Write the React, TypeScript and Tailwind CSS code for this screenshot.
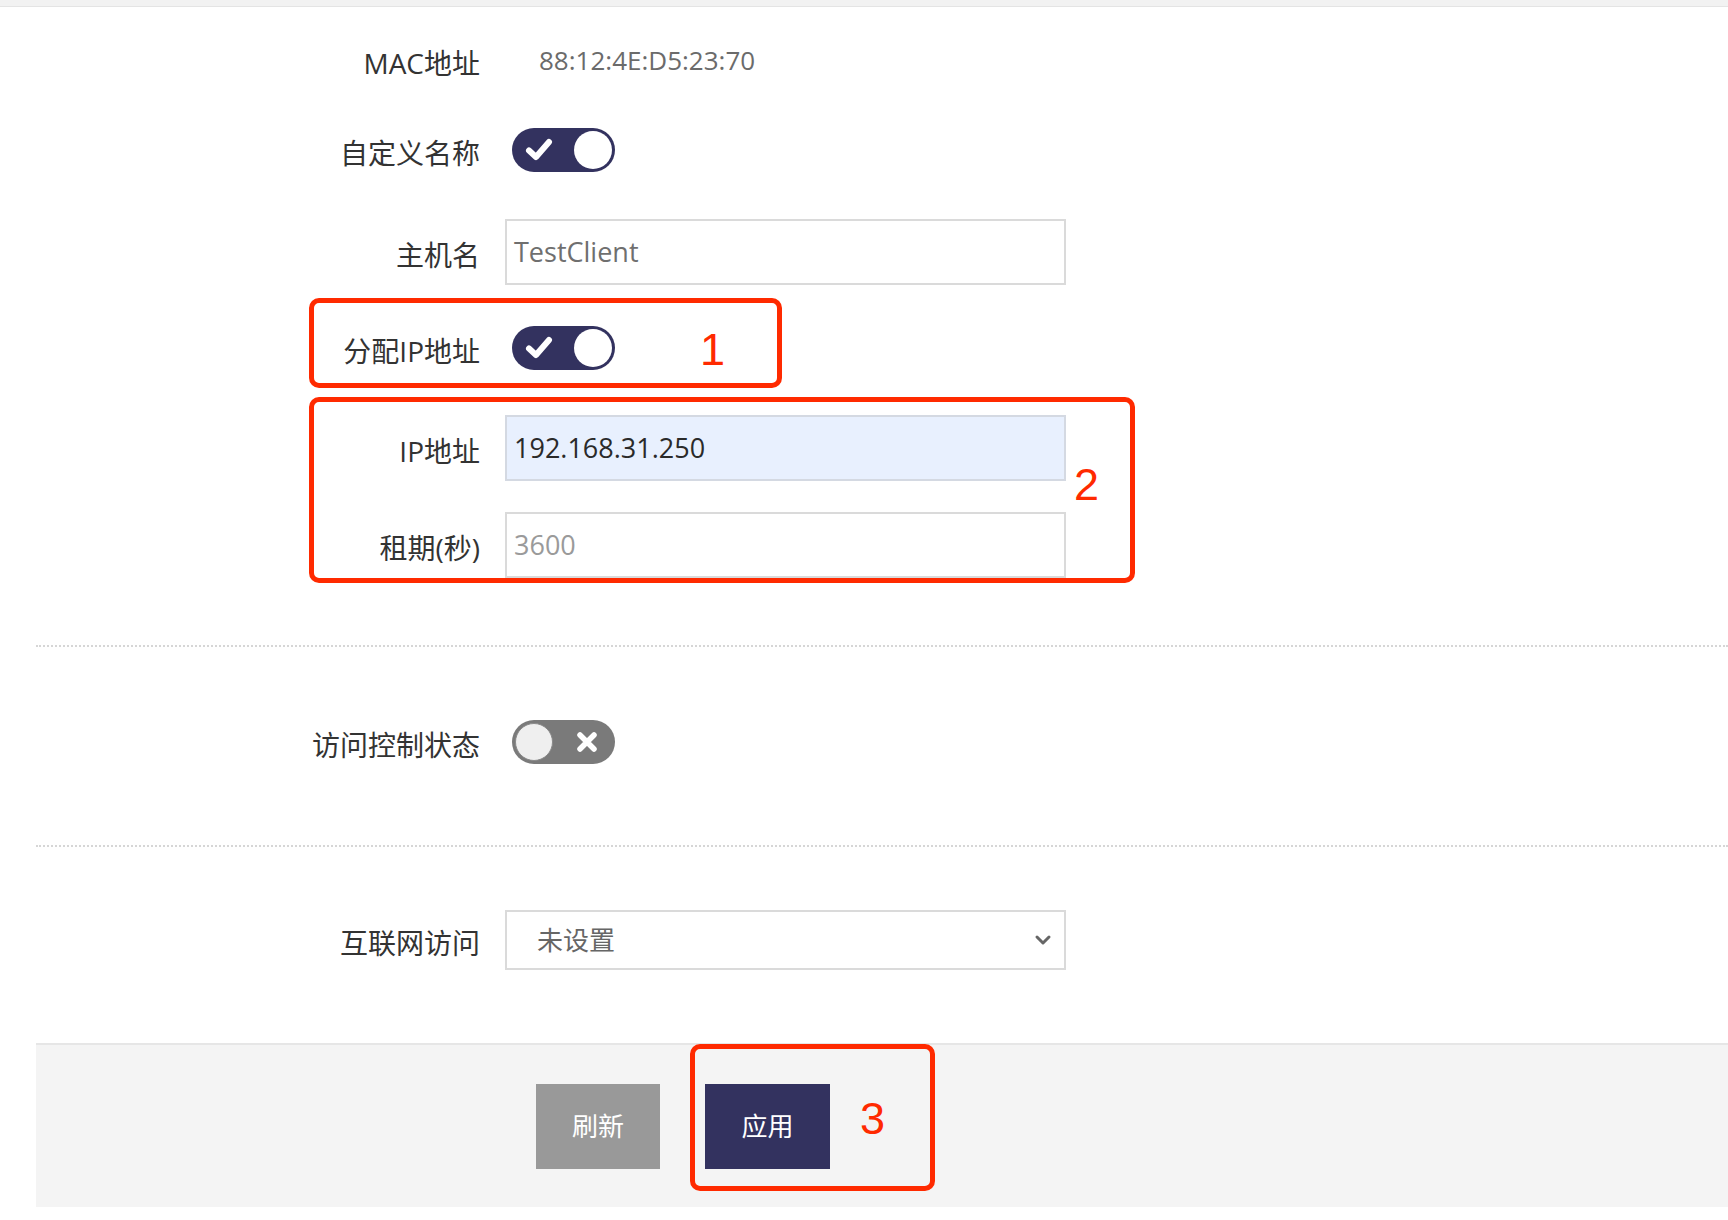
import React from "react";

const FONT = "font-['Open_Sans','Noto_Sans_CJK_SC',sans-serif]";

function ToggleOn() {
  return (
    <div className="w-[103px] h-[44px] rounded-full bg-[#33325f] flex items-center justify-between pl-[12px] pr-[3px]">
      <svg width="30" height="26" viewBox="0 0 30 26" fill="none">
        <path d="M5 13.5 L12 20 L25 5" stroke="white" strokeWidth="6" strokeLinecap="round" strokeLinejoin="round" />
      </svg>
      <div className="w-[38px] h-[38px] rounded-full bg-white" />
    </div>
  );
}

function ToggleOff() {
  return (
    <div className="w-[103px] h-[44px] rounded-full bg-[#7a7a7a] flex items-center justify-between pl-[3px] pr-[17px]">
      <div className="w-[38px] h-[38px] rounded-full bg-[#efefef] border border-[#8a8a8a]" />
      <svg width="22" height="22" viewBox="0 0 22 22" fill="none">
        <path d="M4 4 L18 18 M18 4 L4 18" stroke="white" strokeWidth="5.5" strokeLinecap="round" />
      </svg>
    </div>
  );
}

function Label({ children }: { children: React.ReactNode }) {
  return (
    <div className="w-[444px] shrink-0 text-right text-[28px] text-[#333333] pt-[6px] leading-none">{children}</div>
  );
}

export default function App() {
  return (
    <div className={`relative w-[1728px] h-[1220px] bg-white overflow-hidden ${FONT}`}>
      <div className="h-[7px] bg-[#f2f2f2] border-b border-[#e4e4e4]" />
      <div className="pl-[36px]">
        {/* MAC */}
        <div className="flex items-center h-[44px] mt-[31px]">
          <Label>MAC地址</Label>
          <div className="ml-[59px] text-[26px] text-[#6b6b6b] leading-none">88:12:4E:D5:23:70</div>
        </div>
        {/* custom name */}
        <div className="flex items-center h-[44px] mt-[46px]">
          <Label>自定义名称</Label>
          <div className="ml-[32px]">
            <ToggleOn />
          </div>
        </div>
        {/* hostname */}
        <div className="flex items-center h-[66px] mt-[47px]">
          <Label>主机名</Label>
          <div className="ml-[25px] w-[561px] h-[66px] border-2 border-[#dadada] bg-white flex items-center pl-[7px] text-[27px] text-[#6f6f6f]">
            TestClient
          </div>
        </div>
        {/* assign ip */}
        <div className="flex items-center h-[44px] mt-[41px]">
          <Label>分配IP地址</Label>
          <div className="ml-[32px]">
            <ToggleOn />
          </div>
        </div>
        {/* ip */}
        <div className="flex items-center h-[66px] mt-[45px]">
          <Label>IP地址</Label>
          <div className="ml-[25px] w-[561px] h-[66px] border-2 border-[#d4d9e2] bg-[#e8f0fe] flex items-center pl-[7px] text-[27px] text-[#2a2a2a]">
            192.168.31.250
          </div>
        </div>
        {/* lease */}
        <div className="flex items-center h-[66px] mt-[31px]">
          <Label>租期(秒)</Label>
          <div className="ml-[25px] w-[561px] h-[66px] border-2 border-[#dadada] bg-white flex items-center pl-[7px] text-[27px] text-[#9a9a9a]">
            3600
          </div>
        </div>
        <div className="mt-[67px] border-t-2 border-dotted border-[#d6d6d6]" />
        {/* access control */}
        <div className="flex items-center h-[44px] mt-[73px]">
          <Label>访问控制状态</Label>
          <div className="ml-[32px]">
            <ToggleOff />
          </div>
        </div>
        <div className="mt-[81px] border-t-2 border-dotted border-[#d6d6d6]" />
        {/* internet access */}
        <div className="flex items-center h-[60px] mt-[63px]">
          <Label>互联网访问</Label>
          <div className="ml-[25px] w-[561px] h-[60px] border-2 border-[#dadada] bg-white flex items-center justify-between pl-[30px] pr-[12px] text-[26px] text-[#666666]">
            <span>未设置</span>
            <svg width="18" height="12" viewBox="0 0 18 12" fill="none">
              <path d="M3 3 L9 9 L15 3" stroke="#666666" strokeWidth="3" strokeLinecap="round" strokeLinejoin="round" />
            </svg>
          </div>
        </div>
        {/* footer */}
        <div className="mt-[73px] h-[164px] bg-[#f4f4f4] border-t-2 border-[#e6e6e6] flex items-center pl-[500px] gap-[45px]">
          <button className="w-[124px] h-[85px] bg-[#999999] text-white text-[26px] flex items-center justify-center">刷新</button>
          <button className="w-[125px] h-[85px] bg-[#33325f] text-white text-[26px] flex items-center justify-center">应用</button>
        </div>
      </div>

      {/* annotations */}
      <div className="absolute left-[309px] top-[298px] w-[473px] h-[90px] border-[5px] border-[#ff2a00] rounded-[10px]" />
      <div className="absolute left-[309px] top-[397px] w-[826px] h-[186px] border-[5px] border-[#ff2a00] rounded-[10px]" />
      <div className="absolute left-[690px] top-[1044px] w-[245px] h-[147px] border-[5px] border-[#ff2a00] rounded-[10px]" />
      <div className="absolute left-[700px] top-[327px] text-[45px] leading-none text-[#ff2a00] font-['Liberation_Sans',sans-serif]">1</div>
      <div className="absolute left-[1074px] top-[462px] text-[45px] leading-none text-[#ff2a00] font-['Liberation_Sans',sans-serif]">2</div>
      <div className="absolute left-[860px] top-[1096px] text-[45px] leading-none text-[#ff2a00] font-['Liberation_Sans',sans-serif]">3</div>
    </div>
  );
}
